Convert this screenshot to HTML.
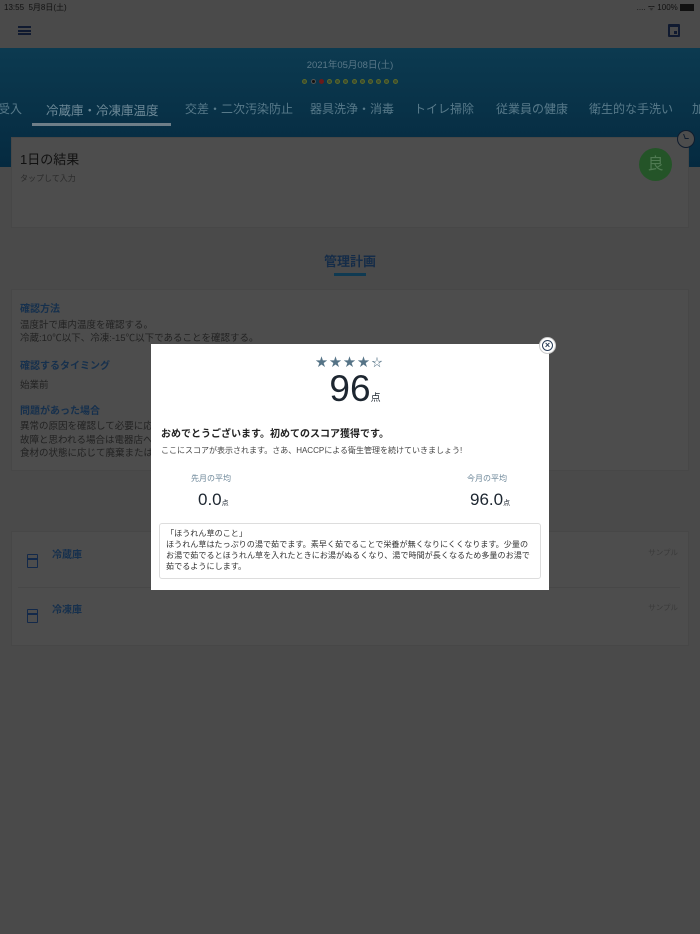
<!DOCTYPE html>
<html><head><meta charset="utf-8"><style>
*{margin:0;padding:0;box-sizing:border-box}
body{width:700px;height:934px;background:#4a4a4a;font-family:"Liberation Sans","Noto Sans CJK JP",sans-serif;position:relative;overflow:hidden;color:#1d1d1d}
.abs{position:absolute}
.blue{left:0;top:48px;width:700px;height:119px;background:linear-gradient(#0c3a50,#052a40)}
.card{background:#4d4d4d;border:1px solid #474747}
.tab{position:absolute;top:100px;font-size:12px;color:#587a8a;white-space:nowrap}
.dot{display:inline-block;width:5px;height:5px;border-radius:50%;border:1px solid #5a6a2a;margin:0 1.6px;background:#3c4a30}
.hd{font-size:10px;color:#16304d;font-weight:bold}
.tx{font-size:9.5px;color:#222}
</style></head><body>
<div class="abs" style="left:4px;top:2px;font-size:8px;color:#111">13:55&nbsp;&nbsp;5月8日(土)</div>
<div class="abs" style="right:6px;top:2px;font-size:8px;color:#111">.... ᯤ 100% <span style="display:inline-block;width:14px;height:7px;background:#111;vertical-align:middle"></span></div>
<div class="abs" style="left:18px;top:26px;width:13px;height:9px;border-top:2px solid #101a30;border-bottom:2px solid #101a30"><div style="margin-top:1.5px;height:2px;background:#101a30"></div></div>
<div class="abs" style="left:668px;top:24px;width:12px;height:13px;border:2px solid #101a30;border-top-width:3px;border-radius:1px"><div style="position:absolute;right:1px;bottom:1px;width:3px;height:3px;background:#101a30"></div></div>
<div class="abs blue"></div>
<div class="abs" style="left:0;width:700px;top:57px;text-align:center;font-size:9.5px;color:#5a7888">2021年05月08日(土)</div>
<div class="abs" style="left:0;width:700px;top:79px;text-align:center;line-height:6px;font-size:0">
<span class="dot"></span><span class="dot" style="background:#111;border-color:#555"></span><span class="dot" style="background:#6a1a1a;border-color:#6a1a1a"></span><span class="dot"></span><span class="dot"></span><span class="dot"></span><span class="dot"></span><span class="dot"></span><span class="dot"></span><span class="dot"></span><span class="dot"></span><span class="dot"></span></div>
<div class="tab" style="left:-2px">受入</div>
<div class="tab" style="left:46px;color:#6e8a98;font-size:12.5px">冷蔵庫・冷凍庫温度</div>
<div class="abs" style="left:32px;top:123px;width:139px;height:3px;background:#6e7e88"></div>
<div class="tab" style="left:185px">交差・二次汚染防止</div>
<div class="tab" style="left:310px">器具洗浄・消毒</div>
<div class="tab" style="left:414px">トイレ掃除</div>
<div class="tab" style="left:496px">従業員の健康</div>
<div class="tab" style="left:589px">衛生的な手洗い</div>
<div class="tab" style="left:692px">加</div>
<div class="abs card" style="left:11px;top:137px;width:678px;height:91px"></div>
<div class="abs" style="left:20px;top:149px;font-size:13px;color:#111">1日の結果</div>
<div class="abs" style="left:20px;top:173px;font-size:8px;color:#2a2a2a">タップして入力</div>
<div class="abs" style="left:639px;top:148px;width:33px;height:33px;border-radius:50%;background:#245428;color:#4f7a52;font-size:16px;text-align:center;line-height:33px">良</div>
<div class="abs" style="left:677px;top:130px;width:18px;height:18px;border-radius:50%;background:#4d4d4d;border:1.5px solid #0f1c2e"><div style="position:absolute;left:6px;top:3px;width:4px;height:5px;border-left:1.5px solid #0f1c2e;border-bottom:1.5px solid #0f1c2e;transform:skewX(20deg)"></div></div>
<div class="abs" style="left:0;width:700px;top:251px;text-align:center;font-size:13px;font-weight:bold;color:#152c48">管理計画</div>
<div class="abs" style="left:334px;top:273px;width:32px;height:3px;background:#0f3a52"></div>
<div class="abs card" style="left:11px;top:289px;width:678px;height:182px"></div>
<div class="abs hd" style="left:20px;top:300px">確認方法</div>
<div class="abs tx" style="left:20px;top:319px;line-height:13px">温度計で庫内温度を確認する。<br>冷蔵:10℃以下、冷凍:-15℃以下であることを確認する。</div>
<div class="abs hd" style="left:20px;top:357px">確認するタイミング</div>
<div class="abs tx" style="left:20px;top:377px">始業前</div>
<div class="abs hd" style="left:20px;top:402px">問題があった場合</div>
<div class="abs tx" style="left:20px;top:420px;line-height:13.5px">異常の原因を確認して必要に応<br>故障と思われる場合は電器店へ<br>食材の状態に応じて廃棄または</div>
<div class="abs card" style="left:11px;top:531px;width:678px;height:115px"></div>
<div class="abs" style="left:18px;top:587px;width:662px;height:1px;background:#474747"></div>
<div class="abs hd" style="left:52px;top:546px">冷蔵庫</div>
<div class="abs hd" style="left:52px;top:601px">冷凍庫</div>
<div class="abs" style="left:27px;top:554px;width:11px;height:14px;border:1.5px solid #13294a;border-radius:1px"><div style="margin-top:3px;height:1.5px;background:#13294a"></div></div>
<div class="abs" style="left:27px;top:609px;width:11px;height:14px;border:1.5px solid #13294a;border-radius:1px"><div style="margin-top:3px;height:1.5px;background:#13294a"></div></div>
<div class="abs" style="right:22px;top:547px;font-size:7.5px;color:#3a3a3a">サンプル</div>
<div class="abs" style="right:22px;top:602px;font-size:7.5px;color:#3a3a3a">サンプル</div>

<div class="abs" style="left:151px;top:344px;width:398px;height:246px;background:#fff"></div>
<div class="abs" style="left:539px;top:337px;width:17px;height:17px;border-radius:50%;background:#fff;border:1px solid #ccc"><div style="position:absolute;left:2px;top:2px;width:11px;height:11px;border-radius:50%;border:1.3px solid #2a3e58;color:#2a3e58;font-size:9px;line-height:8px;text-align:center;font-weight:bold">×</div></div>
<div class="abs" style="left:150px;width:400px;top:353px;text-align:center;font-size:12px;color:#557386;letter-spacing:2px">★★★★<span style="font-size:11px">☆</span></div>
<div class="abs" style="left:150px;width:400px;top:368px;text-align:center;color:#1d2630;padding-left:10px"><span style="font-size:37px">96</span><span style="font-size:10px">点</span></div>
<div class="abs" style="left:161px;top:425px;font-size:10px;font-weight:bold;color:#222">おめでとうございます。初めてのスコア獲得です。</div>
<div class="abs" style="left:161px;top:445px;font-size:8px;color:#444">ここにスコアが表示されます。さあ、HACCPによる衛生管理を続けていきましょう!</div>
<div class="abs" style="left:191px;top:473px;font-size:8px;color:#6d8799">先月の平均</div>
<div class="abs" style="left:467px;top:473px;font-size:8px;color:#6d8799">今月の平均</div>
<div class="abs" style="left:198px;top:490px;color:#1d2630"><span style="font-size:17px">0.0</span><span style="font-size:7px">点</span></div>
<div class="abs" style="left:470px;top:490px;color:#1d2630"><span style="font-size:17px">96.0</span><span style="font-size:7px">点</span></div>
<div class="abs" style="left:159px;top:523px;width:382px;height:56px;border:1px solid #ddd;border-radius:3px;padding:4px 4px 4px 6px;font-size:8.1px;line-height:11px;color:#333">「ほうれん草のこと」<br>ほうれん草はたっぷりの湯で茹でます。素早く茹でることで栄養が無くなりにくくなります。少量のお湯で茹でるとほうれん草を入れたときにお湯がぬるくなり、湯で時間が長くなるため多量のお湯で茹でるようにします。</div>
</body></html>
